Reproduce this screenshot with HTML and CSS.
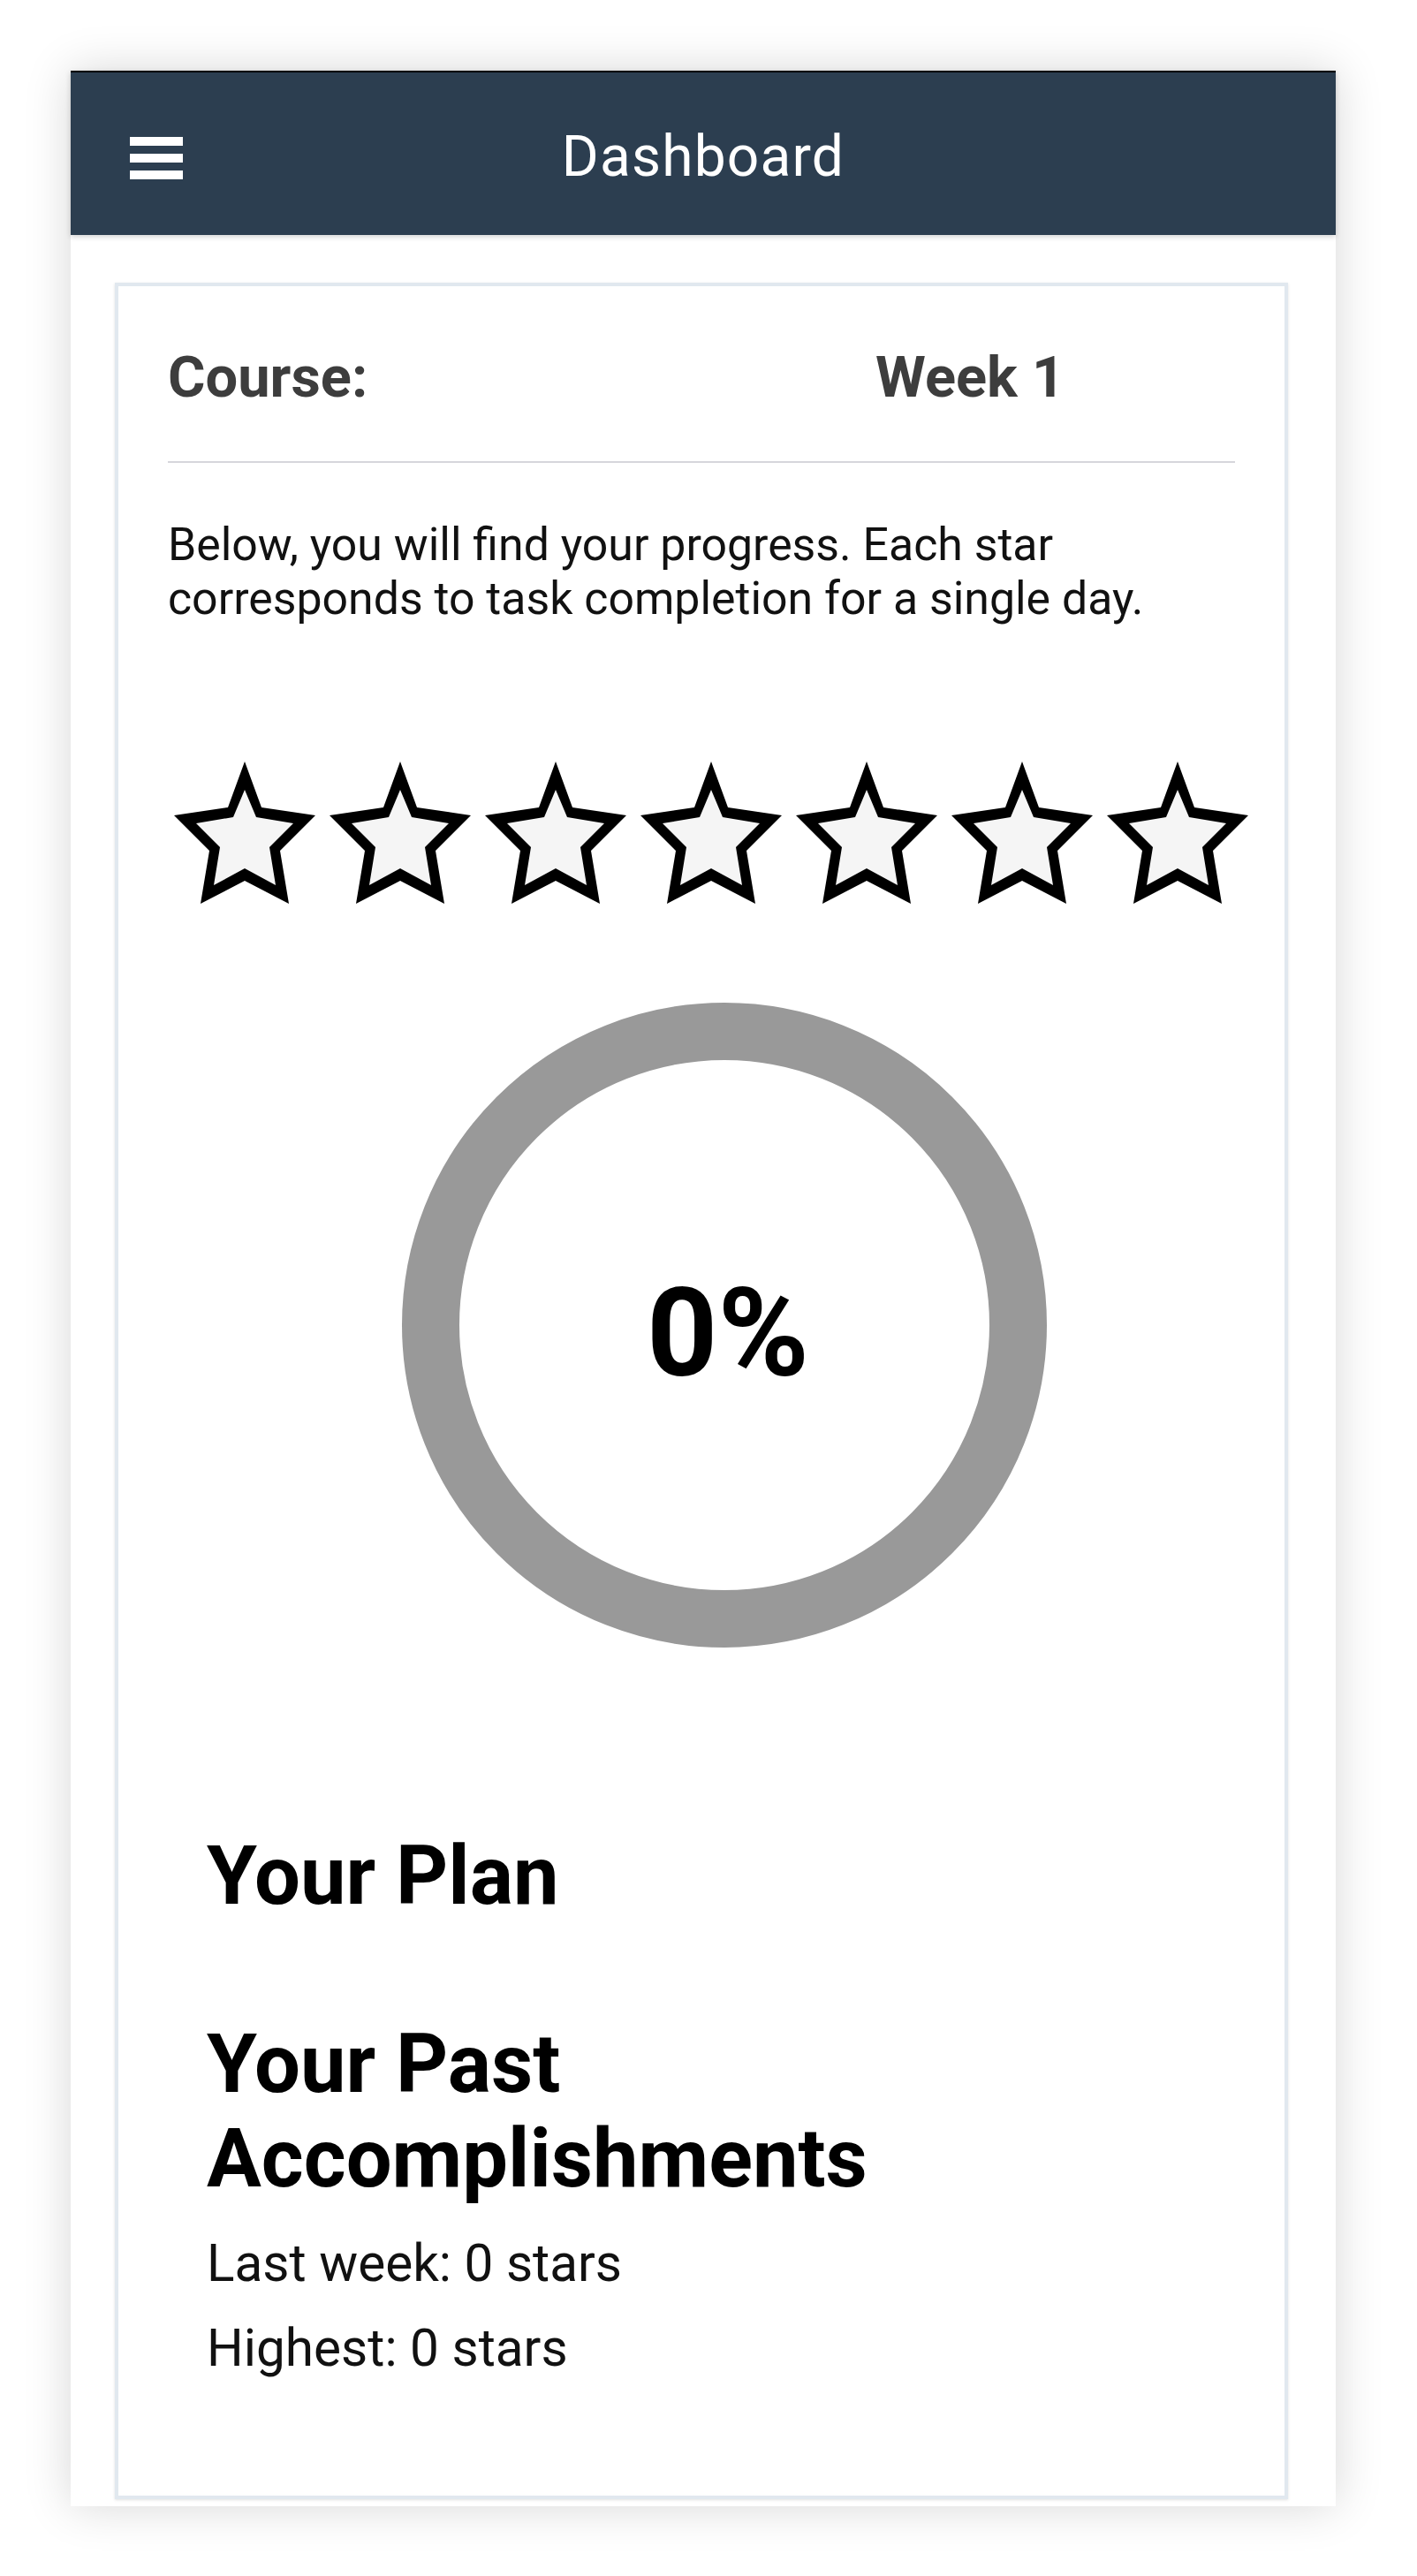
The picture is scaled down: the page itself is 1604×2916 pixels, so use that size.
FILE: index.html
```html
<!DOCTYPE html>
<html lang="en">
<head>
<meta charset="utf-8">
<title>Dashboard</title>
<link rel="stylesheet" href="styles.css">
</head>
<body>
<div class="frame">
  <header class="appbar">
    <div class="menu" aria-label="Menu"><span></span><span></span><span></span></div>
    <h1 class="title">Dashboard</h1>
  </header>
  <main class="content">
    <section class="card">
      <div class="course-row">
        <span class="course-label">Course:</span>
        <span class="week">Week 1</span>
      </div>
      <p class="intro">Below, you will find your progress. Each star corresponds to task completion for a single day.</p>
      <div class="stars">
        <svg class="star" viewBox="0 0 160 161"><polygon class="star-out" points="80,0 99,52 160,61 120,101 130,161 80,135 30,161 40,101 0,61 61,52"/><polygon class="star-in" points="80,32 93,63 135,70 108,97 115,140 80,121 45,140 52,97 25,70 67,63"/></svg>
        <svg class="star" viewBox="0 0 160 161"><polygon class="star-out" points="80,0 99,52 160,61 120,101 130,161 80,135 30,161 40,101 0,61 61,52"/><polygon class="star-in" points="80,32 93,63 135,70 108,97 115,140 80,121 45,140 52,97 25,70 67,63"/></svg>
        <svg class="star" viewBox="0 0 160 161"><polygon class="star-out" points="80,0 99,52 160,61 120,101 130,161 80,135 30,161 40,101 0,61 61,52"/><polygon class="star-in" points="80,32 93,63 135,70 108,97 115,140 80,121 45,140 52,97 25,70 67,63"/></svg>
        <svg class="star" viewBox="0 0 160 161"><polygon class="star-out" points="80,0 99,52 160,61 120,101 130,161 80,135 30,161 40,101 0,61 61,52"/><polygon class="star-in" points="80,32 93,63 135,70 108,97 115,140 80,121 45,140 52,97 25,70 67,63"/></svg>
        <svg class="star" viewBox="0 0 160 161"><polygon class="star-out" points="80,0 99,52 160,61 120,101 130,161 80,135 30,161 40,101 0,61 61,52"/><polygon class="star-in" points="80,32 93,63 135,70 108,97 115,140 80,121 45,140 52,97 25,70 67,63"/></svg>
        <svg class="star" viewBox="0 0 160 161"><polygon class="star-out" points="80,0 99,52 160,61 120,101 130,161 80,135 30,161 40,101 0,61 61,52"/><polygon class="star-in" points="80,32 93,63 135,70 108,97 115,140 80,121 45,140 52,97 25,70 67,63"/></svg>
        <svg class="star" viewBox="0 0 160 161"><polygon class="star-out" points="80,0 99,52 160,61 120,101 130,161 80,135 30,161 40,101 0,61 61,52"/><polygon class="star-in" points="80,32 93,63 135,70 108,97 115,140 80,121 45,140 52,97 25,70 67,63"/></svg>
      </div>
      <div class="progress">
        <svg class="ring" viewBox="0 0 730 730"><circle cx="365" cy="365" r="332.5" fill="none" stroke="#999999" stroke-width="65"/></svg>
        <span class="pct">0%</span>
      </div>
      <div class="sections">
        <h2 class="heading plan">Your Plan</h2>
        <h2 class="heading past">Your Past Accomplishments</h2>
        <p class="stat">Last week: 0 stars</p>
        <p class="stat">Highest: 0 stars</p>
      </div>
    </section>
  </main>
</div>
</body>
</html>
```

FILE: styles.css
```css
html, body {
  margin: 0;
}

body {
  padding: 80px;
  background: #ffffff;
  font-family: Roboto, "Noto Sans", "Liberation Sans", sans-serif;
}

.frame {
  width: 1432px;
  background: #ffffff;
  box-shadow: 0 0 50px rgba(0, 0, 0, 0.16);
}

.appbar {
  position: relative;
  z-index: 1;
  display: grid;
  grid-template-columns: 1fr auto 1fr;
  height: 184px;
  background: #2c3e50;
  border-top: 2px solid #000000;
  box-shadow: 0 2px 6px rgba(0, 0, 0, 0.18);
}

.menu {
  align-self: start;
  justify-self: start;
  margin: 73px 0 0 67px;
  display: flex;
  flex-direction: column;
  gap: 9px;
}

.menu span {
  display: block;
  width: 60px;
  height: 10px;
  background: #ffffff;
}

.title {
  align-self: start;
  margin: 58px 0 0;
  font-size: 64px;
  font-weight: 400;
  line-height: 75px;
  letter-spacing: 1.2px;
  color: #ffffff;
}

.content {
  padding: 54px 54px 8px 50px;
}

.card {
  background: #ffffff;
  border: 4px solid #e1e8ef;
  box-shadow: 0 1px 3px rgba(0, 0, 0, 0.12);
  padding: 66px 56px 133px;
}

.course-row {
  display: grid;
  grid-template-columns: 801px 1fr;
  font-size: 65px;
  font-weight: 700;
  line-height: 75px;
  color: #3d3d3d;
  padding-bottom: 57px;
  border-bottom: 2px solid #d6d6db;
}

.intro {
  margin: 62px 0 0;
  font-size: 51.8px;
  line-height: 61px;
  color: #111111;
}

.stars {
  display: flex;
  gap: 16px;
  margin: 154px 0 0 7px;
}

.star {
  display: block;
  flex: none;
  width: 160px;
  height: 161px;
}

.star-out {
  fill: #000000;
}

.star-in {
  fill: #f5f5f5;
}

.progress {
  display: grid;
  width: 730px;
  height: 730px;
  margin: 112px 0 0 265px;
}

.progress > * {
  grid-area: 1 / 1;
}

.ring {
  display: block;
  width: 730px;
  height: 730px;
}

.pct {
  align-self: center;
  justify-self: center;
  padding: 18px 0 0 8px;
  font-size: 140px;
  font-weight: 700;
  line-height: 1;
  color: #000000;
}

.sections {
  margin-top: 205px;
  padding: 0 44px;
}

.heading {
  margin: 0;
  font-size: 92px;
  font-weight: 700;
  line-height: 107px;
  color: #000000;
}

.plan {
  margin-bottom: 106px;
}

.past {
  margin-bottom: 32px;
}

.stat {
  margin: 0;
  font-size: 58.5px;
  line-height: 67px;
  color: #111111;
}

.stat + .stat {
  margin-top: 29px;
}
```
